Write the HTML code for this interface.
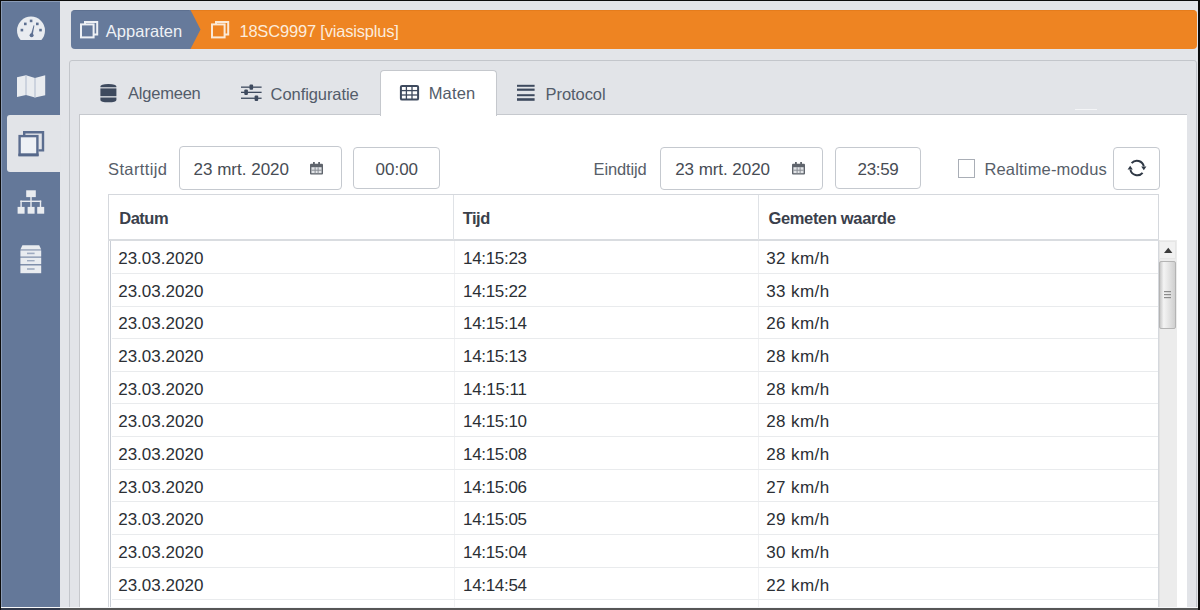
<!DOCTYPE html>
<html><head><meta charset="utf-8">
<style>
*{margin:0;padding:0;box-sizing:border-box}
html,body{width:1200px;height:610px;overflow:hidden;background:#141414}
body{position:relative;font-family:"Liberation Sans",sans-serif}
.a{position:absolute}
.t{white-space:nowrap;line-height:1}
svg{overflow:visible}
</style></head><body>
<div class="a" style="left:1px;top:1px;width:1197px;height:607px;background:#e3e5e9"></div>
<div class="a" style="left:1px;top:1px;width:59px;height:607px;background:#647899"></div>
<div class="a" style="left:7px;top:115px;width:54px;height:57px;background:#e2e4e8;border-radius:3px 0 0 3px"></div>
<svg class="a" style="left:0;top:0" width="60" height="290">
<defs><clipPath id="dc"><rect x="10" y="10" width="40" height="30"/></clipPath></defs>
<circle cx="31" cy="30.6" r="14" fill="#e9ecf0" clip-path="url(#dc)"/>
<g fill="#5d7091">
<rect x="29.8" y="19.6" width="2.6" height="2.6"/>
<rect x="24" y="22.6" width="2.6" height="2.6"/>
<rect x="36" y="22.6" width="2.6" height="2.6"/>
<rect x="20.6" y="28.8" width="2.6" height="2.6"/>
<rect x="39.2" y="28.8" width="2.6" height="2.6"/>
<circle cx="31.6" cy="35.2" r="2"/>
<polygon points="30.8,35 32.6,35.4 34.4,25.4 33.6,25.2"/>
</g>
<polygon points="17,77.2 26,75.2 35,78 45.2,75.2 45.2,95.2 35,97.6 26,95 17,97" fill="#e9ecf0"/>
<line x1="26" y1="75.5" x2="26" y2="95" stroke="#b9c3d3" stroke-width="1.2"/>
<line x1="35" y1="78" x2="35" y2="97.4" stroke="#b9c3d3" stroke-width="1.2"/>
<g fill="none" stroke="#5b6d8f">
<path d="M24.2,135 V132.2 H43 V150.4 H38.4" stroke-width="2.4"/>
<rect x="19.6" y="136.1" width="17.8" height="18.6" stroke-width="2.4" fill="#eef1f5"/>
</g>
<rect x="18.4" y="153.6" width="20.2" height="2.8" fill="#56688a"/>
<g fill="#e9ecf0">
<rect x="26.2" y="190.3" width="9.6" height="6.8"/>
<rect x="30.3" y="197" width="1.4" height="10"/>
<rect x="20.4" y="200.6" width="20.8" height="1.4"/>
<rect x="20.4" y="200.6" width="1.4" height="6.4"/>
<rect x="39.8" y="200.6" width="1.4" height="6.4"/>
<rect x="17.6" y="206.9" width="7" height="6.8"/>
<rect x="27.6" y="206.9" width="7" height="6.8"/>
<rect x="37.2" y="206.9" width="7" height="6.8"/>
</g>
<g fill="#e9ecf0">
<path d="M22.4,245.2 H39.2 L41.2,249.6 H20.4 Z"/>
<rect x="20.4" y="250.4" width="20.8" height="6.2"/>
<rect x="20.4" y="257.6" width="20.8" height="6.6"/>
<rect x="20.4" y="265.4" width="20.8" height="7.8"/>
</g>
<g fill="#9eabc0">
<rect x="27" y="252.6" width="7.6" height="1.6"/>
<rect x="27" y="260" width="7.6" height="1.4"/>
<rect x="27" y="268.2" width="7.6" height="1.6"/>
</g>
</svg>
<div class="a" style="left:70.5px;top:10.2px;width:120.5px;height:39px;background:#667a9b;border-radius:4px 0 0 4px;border-top:1px solid #5d7090"></div>
<div class="a" style="left:190px;top:10.2px;width:1007px;height:39px;background:#ee8422;border-radius:0 4px 4px 0;border-top:1px solid #e57c1c"></div>
<svg class="a" style="left:189px;top:10.2px" width="14" height="39"><polygon points="0,0 1.5,0 11.5,19.5 1.5,39 0,39" fill="#667a9b"/></svg>
<svg class="a" style="left:80px;top:21px" width="20" height="18"><g fill="none" stroke="#eef1f5" stroke-width="2"><path d="M5,3.2 V1 H17.2 V13.4 H14"/><rect x="1" y="3.4" width="12.6" height="13"/></g></svg>
<svg class="a" style="left:211px;top:21px" width="20" height="18"><g fill="none" stroke="#fbe9d6" stroke-width="2"><path d="M5,3.2 V1 H17.2 V13.4 H14"/><rect x="1" y="3.4" width="12.6" height="13"/></g></svg>
<div class="a t" style="left:105.80px;top:23.13px;font-size:16.5px;letter-spacing:0.025px;color:#eef1f5;">Apparaten</div>
<div class="a t" style="left:239.40px;top:23.13px;font-size:16.5px;letter-spacing:-0.185px;color:#fcecdc;">18SC9997 [viasisplus]</div>
<div class="a" style="left:69px;top:60px;width:1128px;height:560px;background:#e2e4e8;border:1px solid #c3c6cb;border-radius:3px"></div>
<div class="a" style="left:79.4px;top:113.9px;width:1107.6px;height:500px;background:#fff;border-left:1.6px solid #c6c8cc;border-top:1.6px solid #c6c9ce"></div>
<div class="a" style="left:380px;top:69.5px;width:116.5px;height:46px;background:#fff;border:1.3px solid #c5c8cd;border-bottom:none;border-radius:4px 4px 0 0"></div>
<div class="a t" style="left:128.00px;top:85.43px;font-size:16.5px;letter-spacing:-0.214px;color:#535c6a;">Algemeen</div>
<div class="a t" style="left:270.60px;top:85.63px;font-size:16.5px;letter-spacing:-0.077px;color:#535c6a;">Configuratie</div>
<div class="a t" style="left:428.70px;top:85.43px;font-size:16.5px;letter-spacing:0.175px;color:#535c6a;">Maten</div>
<div class="a t" style="left:545.60px;top:85.63px;font-size:16.5px;letter-spacing:-0.071px;color:#535c6a;">Protocol</div>
<svg class="a" style="left:0;top:0" width="620" height="110">
<g fill="#3e4a5e">
<path d="M100.4,86.6 Q100.4,83.9 108.4,83.9 Q116.4,83.9 116.4,86.6 V87.2 H100.4 Z"/>
<rect x="100.4" y="88.4" width="16" height="7.8"/>
<path d="M100.4,97.4 H116.4 V100 Q116.4,102.3 108.4,102.3 Q100.4,102.3 100.4,100 Z"/>
</g>
<g fill="#3e4a5e">
<rect x="241" y="86.5" width="20.6" height="1.3"/>
<rect x="241" y="91.7" width="20.6" height="1.3"/>
<rect x="241" y="97.6" width="20.6" height="1.3"/>
<rect x="249.5" y="84.4" width="3.6" height="5.4" rx="1"/>
<rect x="244.3" y="89.6" width="3.6" height="5.4" rx="1"/>
<rect x="254.6" y="95.5" width="3.6" height="5.4" rx="1"/>
</g>
<g fill="none" stroke="#3e4a5e">
<rect x="400.9" y="85.9" width="17.2" height="13.7" rx="1.2" stroke-width="2"/>
<line x1="401" y1="90.6" x2="418" y2="90.6" stroke-width="1.3"/>
<line x1="401" y1="95" x2="418" y2="95" stroke-width="1.3"/>
<line x1="406.4" y1="86" x2="406.4" y2="99.5" stroke-width="1.3"/>
<line x1="412" y1="86" x2="412" y2="99.5" stroke-width="1.3"/>
</g>
<g fill="#3e4a5e">
<rect x="517" y="84.8" width="17.6" height="2"/>
<rect x="517" y="88.6" width="17.6" height="2.2"/>
<rect x="517" y="94.2" width="17.6" height="2"/>
<rect x="517" y="98.2" width="17.6" height="2.6"/>
</g>
</svg>
<div class="a t" style="left:108.00px;top:161.03px;font-size:16.5px;letter-spacing:0.388px;color:#575e69;">Starttijd</div>
<div class="a" style="left:179px;top:146.4px;width:163px;height:43.79999999999998px;background:#fff;border:1.2px solid #c5c9cf;border-radius:4px"></div>
<div class="a t" style="left:193.50px;top:160.91px;font-size:17px;letter-spacing:0.009px;color:#474c54;">23 mrt. 2020</div>
<div class="a" style="left:353px;top:147.4px;width:87px;height:41.599999999999994px;background:#fff;border:1.2px solid #c5c9cf;border-radius:4px"></div>
<div class="a t" style="left:375.50px;top:160.91px;font-size:17px;letter-spacing:0.000px;color:#474c54;">00:00</div>
<div class="a t" style="left:593.50px;top:161.03px;font-size:16.5px;letter-spacing:-0.129px;color:#575e69;">Eindtijd</div>
<div class="a" style="left:660px;top:146.7px;width:162.5px;height:42.900000000000006px;background:#fff;border:1.2px solid #c5c9cf;border-radius:4px"></div>
<div class="a t" style="left:675.20px;top:160.91px;font-size:17px;letter-spacing:-0.055px;color:#474c54;">23 mrt. 2020</div>
<div class="a" style="left:835px;top:147.4px;width:86.39999999999998px;height:41.400000000000006px;background:#fff;border:1.2px solid #c5c9cf;border-radius:4px"></div>
<div class="a t" style="left:857.50px;top:160.91px;font-size:17px;letter-spacing:-0.325px;color:#474c54;">23:59</div>
<svg class="a" style="left:309.8px;top:162px" width="14" height="14"><g fill="#5f646c"><rect x="0" y="1.8" width="13" height="10.8" rx="1"/></g><g fill="#e2e4e7"><rect x="1.4" y="5.2" width="10.2" height="6"/></g><g fill="#8a8f96"><rect x="1.4" y="7.7" width="10.2" height="1"/><rect x="4.6" y="5.2" width="1" height="6"/><rect x="7.6" y="5.2" width="1" height="6"/></g><g fill="#5f646c"><rect x="3" y="0" width="1.8" height="3.2"/><rect x="8.2" y="0" width="1.8" height="3.2"/></g></svg>
<svg class="a" style="left:792.2px;top:161.8px" width="14" height="14"><g fill="#5f646c"><rect x="0" y="1.8" width="13" height="10.8" rx="1"/></g><g fill="#e2e4e7"><rect x="1.4" y="5.2" width="10.2" height="6"/></g><g fill="#8a8f96"><rect x="1.4" y="7.7" width="10.2" height="1"/><rect x="4.6" y="5.2" width="1" height="6"/><rect x="7.6" y="5.2" width="1" height="6"/></g><g fill="#5f646c"><rect x="3" y="0" width="1.8" height="3.2"/><rect x="8.2" y="0" width="1.8" height="3.2"/></g></svg>
<div class="a" style="left:958px;top:158.8px;width:17px;height:18.8px;background:#fff;border:1.3px solid #a9aeb6"></div>
<div class="a t" style="left:984.40px;top:161.03px;font-size:16.5px;letter-spacing:0.177px;color:#575e69;">Realtime-modus</div>
<div class="a" style="left:1113px;top:146.5px;width:47px;height:43.5px;background:#fff;border:1.2px solid #c5c9cf;border-radius:4px"></div>
<svg class="a" style="left:1126px;top:158px" width="22" height="20"><g fill="none" stroke="#2f3845" stroke-width="2">
<path d="M5.6,5.2 A7,7 0 0 1 17.8,8.4"/>
<path d="M16.6,14.8 A7,7 0 0 1 4.4,11.6"/>
</g><g fill="#2f3845"><polygon points="15.2,8.6 20.4,8.6 17.8,12.2"/><polygon points="1.6,11.4 6.8,11.4 4.2,7.8"/></g></svg>
<div class="a" style="left:108px;top:194px;width:1051px;height:420px;border:1.5px solid #d5d8dd;border-bottom:none;background:#fff"></div>
<div class="a" style="left:108px;top:239.2px;width:1051px;height:2px;background:#d9dce0"></div>
<div class="a" style="left:453px;top:195px;width:1.2px;height:45px;background:#dfe2e6"></div>
<div class="a" style="left:757.8px;top:195px;width:1.2px;height:45px;background:#dfe2e6"></div>
<div class="a" style="left:110px;top:241px;width:1.2px;height:370px;background:#c9ced6"></div>
<div class="a" style="left:453.6px;top:241px;width:1px;height:370px;background:#f0f1f3"></div>
<div class="a" style="left:758.2px;top:241px;width:1px;height:370px;background:#f0f1f3"></div>
<div class="a t" style="left:119.20px;top:210.13px;font-size:16.5px;letter-spacing:-0.475px;color:#3a404b;font-weight:bold;">Datum</div>
<div class="a t" style="left:462.70px;top:210.13px;font-size:16.5px;letter-spacing:-0.500px;color:#3a404b;font-weight:bold;">Tijd</div>
<div class="a t" style="left:768.50px;top:210.13px;font-size:16.5px;letter-spacing:-0.354px;color:#3a404b;font-weight:bold;">Gemeten waarde</div>
<div class="a" style="left:112px;top:273px;width:1046px;height:1px;background:#e9ebed"></div>
<div class="a t" style="left:118.20px;top:250.21px;font-size:17px;letter-spacing:0.011px;color:#2b2f35;">23.03.2020</div>
<div class="a t" style="left:463.00px;top:250.21px;font-size:17px;letter-spacing:-0.314px;color:#2b2f35;">14:15:23</div>
<div class="a t" style="left:766.20px;top:250.21px;font-size:17px;letter-spacing:0.417px;color:#2b2f35;">32 km/h</div>
<div class="a" style="left:112px;top:306px;width:1046px;height:1px;background:#e9ebed"></div>
<div class="a t" style="left:118.20px;top:282.85px;font-size:17px;letter-spacing:0.011px;color:#2b2f35;">23.03.2020</div>
<div class="a t" style="left:463.00px;top:282.85px;font-size:17px;letter-spacing:-0.314px;color:#2b2f35;">14:15:22</div>
<div class="a t" style="left:766.20px;top:282.85px;font-size:17px;letter-spacing:0.417px;color:#2b2f35;">33 km/h</div>
<div class="a" style="left:112px;top:338px;width:1046px;height:1px;background:#e9ebed"></div>
<div class="a t" style="left:118.20px;top:315.49px;font-size:17px;letter-spacing:0.011px;color:#2b2f35;">23.03.2020</div>
<div class="a t" style="left:463.00px;top:315.49px;font-size:17px;letter-spacing:-0.314px;color:#2b2f35;">14:15:14</div>
<div class="a t" style="left:766.20px;top:315.49px;font-size:17px;letter-spacing:0.417px;color:#2b2f35;">26 km/h</div>
<div class="a" style="left:112px;top:371px;width:1046px;height:1px;background:#e9ebed"></div>
<div class="a t" style="left:118.20px;top:348.13px;font-size:17px;letter-spacing:0.011px;color:#2b2f35;">23.03.2020</div>
<div class="a t" style="left:463.00px;top:348.13px;font-size:17px;letter-spacing:-0.314px;color:#2b2f35;">14:15:13</div>
<div class="a t" style="left:766.20px;top:348.13px;font-size:17px;letter-spacing:0.417px;color:#2b2f35;">28 km/h</div>
<div class="a" style="left:112px;top:403px;width:1046px;height:1px;background:#e9ebed"></div>
<div class="a t" style="left:118.20px;top:380.77px;font-size:17px;letter-spacing:0.011px;color:#2b2f35;">23.03.2020</div>
<div class="a t" style="left:463.00px;top:380.77px;font-size:17px;letter-spacing:-0.129px;color:#2b2f35;">14:15:11</div>
<div class="a t" style="left:766.20px;top:380.77px;font-size:17px;letter-spacing:0.417px;color:#2b2f35;">28 km/h</div>
<div class="a" style="left:112px;top:436px;width:1046px;height:1px;background:#e9ebed"></div>
<div class="a t" style="left:118.20px;top:413.41px;font-size:17px;letter-spacing:0.011px;color:#2b2f35;">23.03.2020</div>
<div class="a t" style="left:463.00px;top:413.41px;font-size:17px;letter-spacing:-0.314px;color:#2b2f35;">14:15:10</div>
<div class="a t" style="left:766.20px;top:413.41px;font-size:17px;letter-spacing:0.417px;color:#2b2f35;">28 km/h</div>
<div class="a" style="left:112px;top:469px;width:1046px;height:1px;background:#e9ebed"></div>
<div class="a t" style="left:118.20px;top:446.05px;font-size:17px;letter-spacing:0.011px;color:#2b2f35;">23.03.2020</div>
<div class="a t" style="left:463.00px;top:446.05px;font-size:17px;letter-spacing:-0.314px;color:#2b2f35;">14:15:08</div>
<div class="a t" style="left:766.20px;top:446.05px;font-size:17px;letter-spacing:0.417px;color:#2b2f35;">28 km/h</div>
<div class="a" style="left:112px;top:501px;width:1046px;height:1px;background:#e9ebed"></div>
<div class="a t" style="left:118.20px;top:478.69px;font-size:17px;letter-spacing:0.011px;color:#2b2f35;">23.03.2020</div>
<div class="a t" style="left:463.00px;top:478.69px;font-size:17px;letter-spacing:-0.314px;color:#2b2f35;">14:15:06</div>
<div class="a t" style="left:766.20px;top:478.69px;font-size:17px;letter-spacing:0.417px;color:#2b2f35;">27 km/h</div>
<div class="a" style="left:112px;top:534px;width:1046px;height:1px;background:#e9ebed"></div>
<div class="a t" style="left:118.20px;top:511.33px;font-size:17px;letter-spacing:0.011px;color:#2b2f35;">23.03.2020</div>
<div class="a t" style="left:463.00px;top:511.33px;font-size:17px;letter-spacing:-0.314px;color:#2b2f35;">14:15:05</div>
<div class="a t" style="left:766.20px;top:511.33px;font-size:17px;letter-spacing:0.417px;color:#2b2f35;">29 km/h</div>
<div class="a" style="left:112px;top:567px;width:1046px;height:1px;background:#e9ebed"></div>
<div class="a t" style="left:118.20px;top:543.97px;font-size:17px;letter-spacing:0.011px;color:#2b2f35;">23.03.2020</div>
<div class="a t" style="left:463.00px;top:543.97px;font-size:17px;letter-spacing:-0.314px;color:#2b2f35;">14:15:04</div>
<div class="a t" style="left:766.20px;top:543.97px;font-size:17px;letter-spacing:0.417px;color:#2b2f35;">30 km/h</div>
<div class="a" style="left:112px;top:599px;width:1046px;height:1px;background:#e9ebed"></div>
<div class="a t" style="left:118.20px;top:576.61px;font-size:17px;letter-spacing:0.011px;color:#2b2f35;">23.03.2020</div>
<div class="a t" style="left:463.00px;top:576.61px;font-size:17px;letter-spacing:-0.314px;color:#2b2f35;">14:14:54</div>
<div class="a t" style="left:766.20px;top:576.61px;font-size:17px;letter-spacing:0.417px;color:#2b2f35;">22 km/h</div>
<div class="a" style="left:1158.5px;top:240px;width:18px;height:370px;background:#ececec;border-left:1px solid #e2e2e2"></div>
<div class="a" style="left:1159px;top:241px;width:17px;height:18px;background:#f1f1f1;border:1px solid #e6e6e6"></div>
<svg class="a" style="left:1163px;top:247px" width="10" height="7"><polygon points="1,6 5.3,0.8 9.4,6" fill="#3b3b3b"/></svg>
<div class="a" style="left:1158.5px;top:260.8px;width:17.5px;height:68.5px;border:1px solid #b4b4b4;border-radius:2px;background:linear-gradient(90deg,#c9c9c9 0%,#f4f4f4 25%,#e6e6e6 55%,#cfcfcf 100%)"></div>
<svg class="a" style="left:1163px;top:290px" width="10" height="12"><g fill="#8c8c8c"><rect x="1" y="1" width="7" height="1.2"/><rect x="1" y="4" width="7" height="1.2"/><rect x="1" y="7" width="7" height="1.2"/></g></svg>
<div class="a" style="left:1075px;top:108.5px;width:22px;height:1.5px;background:#f4f5f7"></div>
<div class="a" style="left:0;top:608px;width:1200px;height:2px;background:#565656"></div>
<div class="a" style="left:0;top:608px;width:60px;height:2px;background:#30384a"></div>
<div class="a" style="left:0;top:607px;width:1198px;height:1px;background:#f6f7f9"></div>
<div class="a" style="left:1198px;top:0;width:2px;height:610px;background:#0c0c0c"></div>
<div class="a" style="left:0;top:0;width:1200px;height:1px;background:#0c0c0c"></div>
<div class="a" style="left:0;top:0;width:1px;height:610px;background:#0c0c0c"></div>
<div class="a" style="left:1px;top:1px;width:1px;height:606px;background:#8a9bb6"></div>
<div class="a" style="left:1px;top:1px;width:59px;height:1px;background:#8a9bb6"></div>
</body></html>
